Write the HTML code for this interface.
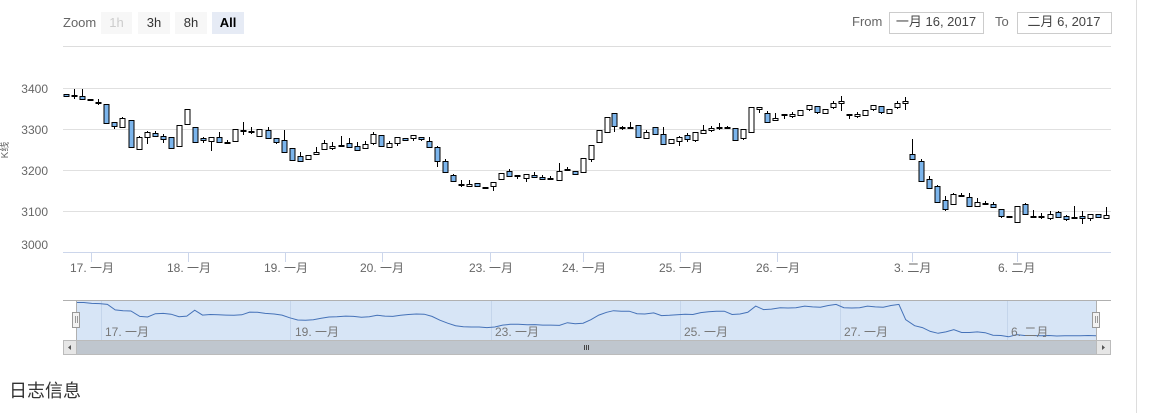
<!DOCTYPE html>
<html><head><meta charset="utf-8">
<style>
html,body{margin:0;padding:0;background:#fff;width:1158px;height:413px;overflow:hidden;font-family:"Liberation Sans","Noto Sans CJK SC",sans-serif}
#vline{position:absolute;left:1136px;top:0;width:1px;height:413px;background:#ddd}
#title{position:absolute;left:9px;top:377px;font-size:18px;color:#333;font-family:"Liberation Sans","Noto Sans CJK SC",sans-serif}
svg{position:absolute;left:0;top:0}
text{font-family:"Liberation Sans","Noto Sans CJK SC",sans-serif}
</style></head><body>
<div id="vline"></div>
<svg id="s" width="1136" height="370" xmlns="http://www.w3.org/2000/svg">
<text x="63" y="27" font-size="13" fill="#666">Zoom</text>
<rect x="101" y="12" width="31" height="22" fill="#f7f7f7"/><text x="116.5" y="27" font-size="13" fill="#ccc" text-anchor="middle">1h</text>
<rect x="138" y="12" width="32" height="22" fill="#f7f7f7"/><text x="154" y="27" font-size="13" fill="#333" text-anchor="middle">3h</text>
<rect x="175" y="12" width="32" height="22" fill="#f7f7f7"/><text x="191" y="27" font-size="13" fill="#333" text-anchor="middle">8h</text>
<rect x="212" y="12" width="32" height="22" fill="#e6ebf5"/><text x="228" y="27" font-size="13" fill="#000" font-weight="bold" text-anchor="middle">All</text>
<text x="852" y="26" font-size="13" fill="#666">From</text>
<rect x="889.5" y="12.5" width="94" height="21" fill="#fff" stroke="#ccc"/><text x="936" y="26" font-size="13" fill="#444" text-anchor="middle">一月 16, 2017</text>
<text x="995" y="26" font-size="13" fill="#666">To</text>
<rect x="1017.5" y="12.5" width="94" height="21" fill="#fff" stroke="#ccc"/><text x="1064" y="26" font-size="13" fill="#444" text-anchor="middle">二月 6, 2017</text>
<line x1="63" y1="46.5" x2="1111" y2="46.5" stroke="#ddd"/>
<g stroke="#e0e0e0">
<line x1="63" y1="88.5" x2="1111" y2="88.5"/><line x1="63" y1="129.5" x2="1111" y2="129.5"/><line x1="63" y1="170.5" x2="1111" y2="170.5"/><line x1="63" y1="211.5" x2="1111" y2="211.5"/>
</g>
<line x1="63" y1="252.5" x2="1111" y2="252.5" stroke="#ccd6eb"/>
<g font-size="12" fill="#666" text-anchor="end">
<text x="48" y="93">3400</text><text x="48" y="134">3300</text><text x="48" y="175">3200</text><text x="48" y="216">3100</text><text x="48" y="249">3000</text>
</g>
<text transform="translate(8,150) rotate(-90)" font-size="10" fill="#666" text-anchor="middle">K线</text>
<g stroke="#ccd6eb">
<line x1="91.5" y1="252" x2="91.5" y2="262"/><line x1="188.5" y1="252" x2="188.5" y2="262"/><line x1="285.5" y1="252" x2="285.5" y2="262"/><line x1="382.5" y1="252" x2="382.5" y2="262"/><line x1="490.5" y1="252" x2="490.5" y2="262"/><line x1="583.5" y1="252" x2="583.5" y2="262"/><line x1="680.5" y1="252" x2="680.5" y2="262"/><line x1="777.5" y1="252" x2="777.5" y2="262"/><line x1="912.5" y1="252" x2="912.5" y2="262"/><line x1="1017.5" y1="252" x2="1017.5" y2="262"/>
</g>
<g font-size="12" fill="#666">
<text x="70" y="272">17. 一月</text><text x="167" y="272">18. 一月</text><text x="264" y="272">19. 一月</text><text x="360" y="272">20. 一月</text><text x="469" y="272">23. 一月</text><text x="562" y="272">24. 一月</text><text x="659" y="272">25. 一月</text><text x="756" y="272">26. 一月</text><text x="894" y="272">3. 二月</text><text x="998" y="272">6. 二月</text>
</g>
<g id="candles"></g>
<!-- navigator -->
<rect x="76" y="300" width="1020" height="40" fill="#d7e5f6"/>
<g stroke="#c4d5eb">
<line x1="101.5" y1="300" x2="101.5" y2="340"/><line x1="290.5" y1="300" x2="290.5" y2="340"/><line x1="491.5" y1="300" x2="491.5" y2="340"/><line x1="680.5" y1="300" x2="680.5" y2="340"/><line x1="840.5" y1="300" x2="840.5" y2="340"/><line x1="1007.5" y1="300" x2="1007.5" y2="340"/>
</g>
<path id="nav" fill="none" stroke="#4572b8" stroke-width="1"/>
<g font-size="12" fill="#777">
<text x="105" y="336">17. 一月</text><text x="295" y="336">19. 一月</text><text x="495" y="336">23. 一月</text><text x="684" y="336">25. 一月</text><text x="844" y="336">27. 一月</text><text x="1011" y="336">6. 二月</text>
</g>
<path d="M63 300.5H1111" stroke="#b0b0b0"/>
<line x1="76.5" y1="300" x2="76.5" y2="340" stroke="#b0b0b0"/>
<line x1="1096.5" y1="300" x2="1096.5" y2="340" stroke="#b0b0b0"/>
<rect x="72.5" y="312.5" width="7" height="15" fill="#f2f2f2" stroke="#999"/>
<path d="M75.5 316v7M77.5 316v7" stroke="#999"/>
<rect x="1092.5" y="312.5" width="7" height="15" fill="#f2f2f2" stroke="#999"/>
<path d="M1095.5 316v7M1097.5 316v7" stroke="#999"/>
<!-- scrollbar -->
<rect x="63" y="340" width="1048" height="14" fill="#f2f2f2"/>
<rect x="76" y="340" width="1020" height="14" fill="#bfc6ce"/>
<rect x="63.5" y="340.5" width="1047" height="14" fill="none" stroke="#bbb"/>
<rect x="63.5" y="340.5" width="13" height="14" fill="#e6e6e6" stroke="#bbb"/>
<rect x="1096.5" y="340.5" width="14" height="14" fill="#e6e6e6" stroke="#bbb"/>
<path d="M71 345v5l-3-2.5z" fill="#555"/><path d="M1102 345v5l3-2.5z" fill="#555"/>
<path d="M584.5 345v5M586.5 345v5M588.5 345v5" stroke="#444"/>
</svg>
<div id="title">日志信息</div>
<script>
var D=[
[66,94,96,94,96,1],[74,89,99,95,96,0],[82,89,99,96,99,1],[90,99,100,99,100,0],[98,99,105,102,103,0],
[106,104,123,104,123,1],[114,122,129,122,126,1],[122,117,127,118,127,0],[131,120,147,120,147,1],[139,136,149,137,149,0],
[147,131,144,132,137,0],[155,131,137,133,136,1],[163,134,143,136,139,1],[171,137,148,137,148,1],[179,125,146,125,146,0],
[187,109,125,109,124,0],[195,127,143,127,142,1],[203,137,143,138,140,1],[211,137,151,137,141,0],[219,132,142,137,142,1],
[227,140,144,142,143,1],[235,129,141,129,141,0],[243,122,135,130,131,1],[251,127,134,131,132,1],[259,129,137,129,136,0],
[268,127,138,130,138,1],[276,138,144,138,142,1],[284,130,152,140,152,1],[292,148,160,148,160,1],[300,152,161,156,161,1],
[308,155,159,155,159,0],[316,147,154,152,154,0],[324,140,150,143,149,0],[332,142,150,146,148,0],[341,136,146,145,146,1],
[349,138,147,143,147,1],[357,142,150,146,150,1],[365,141,148,144,148,0],[373,132,145,134,143,0],[381,135,146,135,146,1],
[389,141,147,143,147,0],[397,137,146,137,143,0],[405,138,140,138,140,1],[413,135,141,135,138,0],[421,137,141,137,139,1],
[429,137,147,141,147,1],[437,146,167,147,161,1],[445,159,172,161,172,1],[453,174,181,175,181,1],[461,180,187,184,185,1],
[469,180,186,184,186,0],[477,183,187,183,186,1],[485,187,188,187,188,0],[493,182,191,182,186,0],[501,173,179,173,179,0],
[509,169,176,171,176,1],[517,175,179,175,176,1],[526,174,182,174,178,0],[534,172,177,175,177,1],[542,175,179,177,179,1],
[550,176,180,178,179,0],[559,163,180,171,180,0],[567,167,171,169,170,0],[575,171,174,171,174,1],[583,158,173,158,172,0],
[591,145,162,145,159,0],[599,130,142,130,142,0],[607,117,132,117,132,0],[614,113,132,113,126,1],[622,126,130,127,128,1],
[630,122,128,127,128,0],[638,125,138,125,137,1],[646,130,138,132,138,0],[655,127,134,127,134,1],[663,127,144,134,144,1],
[671,139,143,139,143,0],[679,136,146,137,141,0],[687,133,142,135,139,1],[695,132,142,132,140,0],[703,125,134,130,133,0],
[711,126,132,128,130,0],[719,123,130,127,128,1],[727,126,129,127,128,1],[735,128,140,128,140,1],[743,129,140,129,138,0],
[751,107,132,107,132,0],[759,107,113,107,109,0],[767,111,122,113,122,1],[775,113,121,118,120,0],[784,114,119,114,115,0],
[792,112,118,114,116,0],[800,110,115,110,115,0],[809,105,111,105,109,0],[817,106,114,106,112,1],[825,109,113,109,113,0],
[833,101,109,103,107,0],[841,96,111,101,103,0],[849,114,119,114,115,0],[857,112,118,114,116,0],[865,110,115,110,115,0],
[873,105,111,105,109,0],[881,106,114,106,112,1],[889,109,113,109,113,0],[897,101,109,103,107,0],[905,97,110,101,103,0],
[912,139,160,154,159,1],[921,159,181,161,181,1],[929,176,188,179,188,1],[937,185,202,186,202,1],[945,196,211,200,209,1],
[953,193,205,194,204,0],[961,193,197,195,196,1],[969,193,206,197,206,1],[977,198,206,202,206,0],[985,201,205,203,204,1],
[993,202,207,204,207,1],[1001,209,218,209,216,1],[1009,216,217,216,217,0],[1017,206,223,206,222,0],[1025,203,214,204,214,1],
[1033,210,217,216,217,1],[1041,213,219,216,217,1],[1050,211,220,214,218,0],[1058,211,218,212,217,1],[1066,215,221,216,219,1],
[1074,206,219,217,218,1],[1082,211,224,216,218,1],[1090,214,221,214,218,0],[1098,214,217,214,217,1],[1106,207,218,215,218,0]
];
var g=document.getElementById('candles'),h='';
D.forEach(function(c){var x=c[0],hgt=Math.max(1,c[4]-c[3]);
h+='<line x1="'+(x+0.5)+'" y1="'+c[1]+'" x2="'+(x+0.5)+'" y2="'+c[2]+'" stroke="#000"/>';
h+='<rect x="'+(x-2)+'" y="'+(c[3]+0.5)+'" width="5" height="'+hgt+'" fill="'+(c[5]?'#7cb5ec':'#fff')+'" stroke="#000"/>';});
g.innerHTML=h;
var p='';D.forEach(function(c,i){var nx=76+(c[0]-66)*(1020/1040);var ny=302+(c[4]-94)*(34/125);p+=(i?'L':'M')+nx.toFixed(1)+' '+ny.toFixed(1);});
document.getElementById('nav').setAttribute('d',p);
</script>
</body></html>
